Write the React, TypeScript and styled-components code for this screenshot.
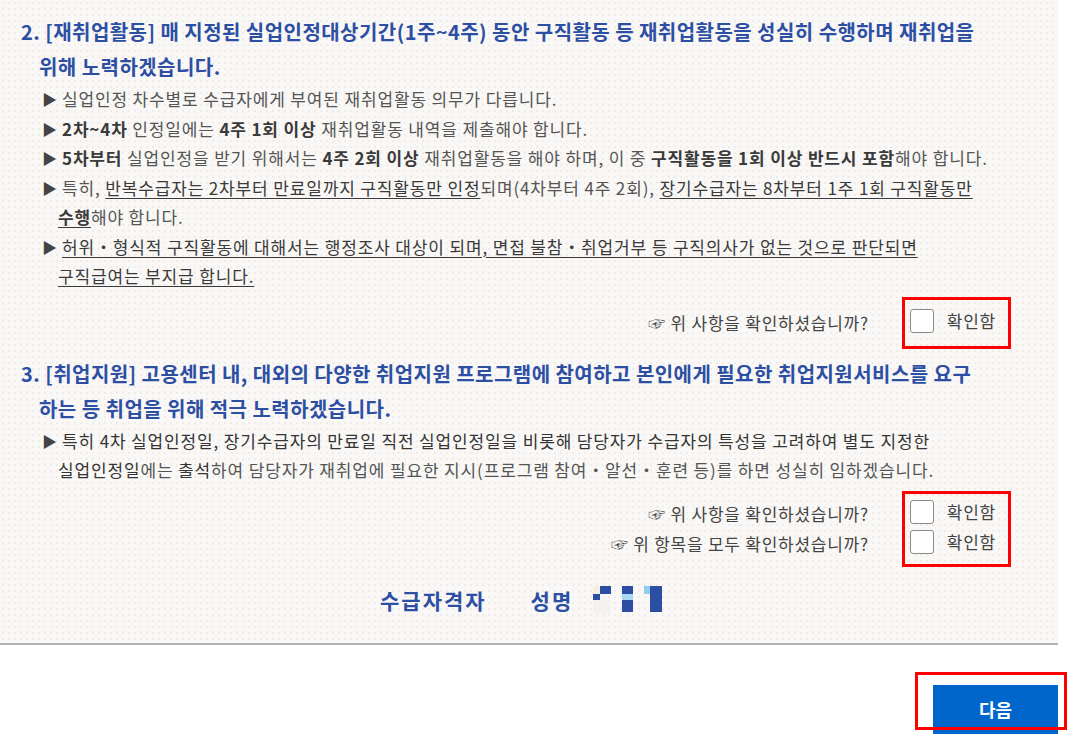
import React from 'react';
import styled, { createGlobalStyle } from 'styled-components';

const GlobalStyle = createGlobalStyle`
  html, body {
    margin: 0;
    padding: 0;
    background: #ffffff;
  }
  body {
    font-family: "Noto Sans CJK KR", "Noto Sans", sans-serif;
    color: #555555;
  }
`;

const Page = styled.div`
  width: 1079px;
  height: 744px;
  overflow: hidden;
`;

const Panel = styled.div`
  width: 1058px;
  box-sizing: border-box;
  padding: 14px 0 23px 21px;
  background-color: #f9f8f6;
  background-image: radial-gradient(#f0ede9 1px, transparent 1.2px);
  background-size: 6px 6px;
  border-bottom: 2px solid #b3b3b3;
`;

const Heading = styled.h3`
  margin: 0;
  padding-left: 18px;
  text-indent: -18px;
  font-size: 20px;
  letter-spacing: 0.45px;
  line-height: 35px;
  font-weight: 700;
  color: #2d4fa3;
  white-space: nowrap;
`;

const BulletList = styled.ul`
  margin: 0;
  padding: 0 0 0 21px;
  list-style: none;
`;

const Bullet = styled.li`
  position: relative;
  padding-left: 20px;
  font-size: 17px;
  letter-spacing: 0.85px;
  line-height: 29.5px;
  color: #555555;
  white-space: nowrap;

  &::before {
    content: '▶';
    position: absolute;
    left: 0;
    top: 0;
    font-size: 15px;
    letter-spacing: 0;
    color: #444444;
  }
`;

const Cont = styled.span`
  display: inline-block;
  margin-left: -4px;
`;

const B = styled.b`
  font-weight: 700;
  color: #3a3a3a;
`;

const U = styled.span<{ $bold?: boolean }>`
  text-decoration: underline;
  text-underline-offset: 3px;
  color: #3a3a3a;
  font-weight: ${(p) => (p.$bold ? 700 : 400)};
`;

const Dark = styled.span`
  color: #353535;
`;

const ConfirmArea = styled.div<{ $top: number }>`
  display: flex;
  justify-content: flex-end;
  align-items: center;
  gap: 33px;
  margin-top: ${(p) => p.$top}px;
  padding-right: 47px;
`;

const Questions = styled.div`
  display: flex;
  flex-direction: column;
  align-items: flex-end;
  padding-top: 1px;
`;

const Question = styled.div`
  height: 30px;
  line-height: 30px;
  font-size: 17px;
  letter-spacing: 0.75px;
  color: #444444;
  white-space: nowrap;
`;

const CheckFrame = styled.div<{ $padTop: number; $padBottom: number }>`
  display: flex;
  flex-direction: column;
  border: 3px solid #ff0000;
  padding: ${(p) => `${p.$padTop}px 12px ${p.$padBottom}px 5px`};
`;

const CheckRow = styled.label`
  display: flex;
  align-items: center;
  gap: 13px;
  height: 30px;
  font-size: 17px;
  letter-spacing: 0.75px;
  color: #444444;
  white-space: nowrap;
`;

const Box = styled.span`
  display: inline-block;
  width: 22px;
  height: 22px;
  background: #ffffff;
  border: 1px solid #8a8a8a;
  border-radius: 3px;
`;

const Section = styled.div<{ $top: number }>`
  margin-top: ${(p) => p.$top}px;
`;

const NameRow = styled.div`
  display: flex;
  align-items: center;
  margin-top: 13px;
  padding-left: 359px;
  height: 40px;
  font-size: 21px;
  letter-spacing: 2px;
  font-weight: 700;
  color: #2d4fa3;
`;

const NameLabel = styled.span<{ $gap: number }>`
  margin-right: ${(p) => p.$gap}px;
`;

const Footer = styled.div`
  width: 1058px;
  display: flex;
  justify-content: flex-end;
  padding-top: 40px;
`;

const ButtonWrap = styled.div`
  position: relative;
`;

const NextButton = styled.button`
  width: 125px;
  height: 49px;
  border: none;
  background: #0066cc;
  color: #ffffff;
  font-family: "Noto Sans CJK KR", sans-serif;
  font-size: 18px;
  font-weight: 700;
  cursor: pointer;
`;

const Highlight = styled.div`
  position: absolute;
  left: -18px;
  top: -13px;
  width: 146px;
  height: 52px;
  border: 3px solid #ff0000;
  pointer-events: none;
`;

const MaskedName = () => (
  <svg width="70" height="27" viewBox="0 0 70 27">
    <rect x="0" y="0" width="7" height="8" fill="#f5f0e0" />
    <rect x="7" y="0" width="11" height="8" fill="#2d4fa3" />
    <rect x="0" y="8" width="7" height="6" fill="#2d4fa3" />
    <rect x="0" y="14" width="18" height="13" fill="#f3f2f0" />
    <rect x="29" y="0" width="11" height="8" fill="#2d4fa3" />
    <rect x="29" y="8" width="11" height="6" fill="#a9d8f2" />
    <rect x="29" y="14" width="11" height="12" fill="#2d4fa3" />
    <rect x="51" y="0" width="6" height="8" fill="#94cdf0" />
    <rect x="57" y="0" width="12" height="26" fill="#2d4fa3" />
  </svg>
);

export default function App() {
  return (
    <Page>
      <GlobalStyle />
      <Panel>
        <Section $top={0}>
          <Heading>
            2. [재취업활동] 매 지정된 실업인정대상기간(1주~4주) 동안 구직활동 등 재취업활동을 성실히 수행하며 재취업을
            <br />
            위해 노력하겠습니다.
          </Heading>
          <BulletList>
            <Bullet>실업인정 차수별로 수급자에게 부여된 재취업활동 의무가 다릅니다.</Bullet>
            <Bullet>
              <B>2차~4차</B> 인정일에는 <B>4주 1회 이상</B> 재취업활동 내역을 제출해야 합니다.
            </Bullet>
            <Bullet>
              <B>5차부터</B> 실업인정을 받기 위해서는 <B>4주 2회 이상</B> 재취업활동을 해야 하며, 이 중{' '}
              <B>구직활동을 1회 이상 반드시 포함</B>해야 합니다.
            </Bullet>
            <Bullet>
              특히, <U>반복수급자는 2차부터 만료일까지 구직활동만 인정</U>되며(4차부터 4주 2회),{' '}
              <U>장기수급자는 8차부터 1주 1회 구직활동만</U>
              <br />
              <Cont>
                <U $bold>수행</U>해야 합니다.
              </Cont>
            </Bullet>
            <Bullet>
              <U>허위・형식적 구직활동에 대해서는 행정조사 대상이 되며, 면접 불참・취업거부 등 구직의사가 없는 것으로 판단되면</U>
              <br />
              <Cont>
                <U>구직급여는 부지급 합니다.</U>
              </Cont>
            </Bullet>
          </BulletList>
        </Section>

        <ConfirmArea $top={6}>
          <Questions>
            <Question>☞ 위 사항을 확인하셨습니까?</Question>
          </Questions>
          <CheckFrame $padTop={6} $padBottom={10}>
            <CheckRow>
              <Box />
              확인함
            </CheckRow>
          </CheckFrame>
        </ConfirmArea>

        <Section $top={7}>
          <Heading>
            3. [취업지원] 고용센터 내, 대외의 다양한 취업지원 프로그램에 참여하고 본인에게 필요한 취업지원서비스를 요구
            <br />
            하는 등 취업을 위해 적극 노력하겠습니다.
          </Heading>
          <BulletList>
            <Bullet>
              <Dark>특히 4차 실업인정일, 장기수급자의 만료일 직전 실업인정일을 비롯해 담당자가 수급자의 특성을 고려하여 별도 지정한</Dark>
              <br />
              <Cont>
                <Dark>실업인정일</Dark>에는 <Dark>출석</Dark>하여 담당자가 재취업에 필요한 지시(프로그램 참여・알선・훈련 등)를 하면 성실히 임하겠습니다.
              </Cont>
            </Bullet>
          </BulletList>
        </Section>

        <ConfirmArea $top={6}>
          <Questions>
            <Question>☞ 위 사항을 확인하셨습니까?</Question>
            <Question>☞ 위 항목을 모두 확인하셨습니까?</Question>
          </Questions>
          <CheckFrame $padTop={3} $padBottom={7}>
            <CheckRow>
              <Box />
              확인함
            </CheckRow>
            <CheckRow>
              <Box />
              확인함
            </CheckRow>
          </CheckFrame>
        </ConfirmArea>

        <NameRow>
          <NameLabel $gap={44}>수급자격자</NameLabel>
          <NameLabel $gap={20}>성명</NameLabel>
          <MaskedName />
        </NameRow>
      </Panel>
      <Footer>
        <ButtonWrap>
          <NextButton type="button">다음</NextButton>
          <Highlight />
        </ButtonWrap>
      </Footer>
    </Page>
  );
}
